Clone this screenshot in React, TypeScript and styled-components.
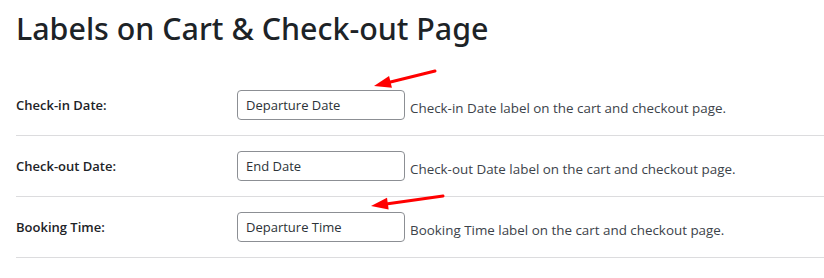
import React from 'react';
import styled, { createGlobalStyle } from 'styled-components';

const GlobalStyle = createGlobalStyle`
    body {
        margin: 0;
        background: #fff;
        font-family: 'Open Sans', 'Noto Sans', sans-serif;
        color: #1d2327;
    }
`;

interface IField {
    label: string;
    value: string;
    hint: string;
}

const fields: IField[] = [
    { label: 'Check-in Date:', value: 'Departure Date', hint: 'Check-in Date label on the cart and checkout page.' },
    { label: 'Check-out Date:', value: 'End Date', hint: 'Check-out Date label on the cart and checkout page.' },
    { label: 'Booking Time:', value: 'Departure Time', hint: 'Booking Time label on the cart and checkout page.' },
];

const Arrow = ({ x1, y1, x2, y2 }: { x1: number; y1: number; x2: number; y2: number }) => {
    const ang = Math.atan2(y2 - y1, x2 - x1);
    const len = 17;
    const half = 6;
    const bx = x2 - len * Math.cos(ang);
    const by = y2 - len * Math.sin(ang);
    const px = -Math.sin(ang) * half;
    const py = Math.cos(ang) * half;
    return (
        <g>
            <line x1={x1} y1={y1} x2={bx} y2={by} stroke="#f00" strokeWidth="3" strokeLinecap="round" />
            <polygon points={`${x2},${y2} ${bx + px},${by + py} ${bx - px},${by - py}`} fill="#f00" />
        </g>
    );
};

const App = () => {
    return (
        <Page>
            <GlobalStyle />
            <Title>Labels on Cart &amp; Check-out Page</Title>
            <Form>
                {fields.map(f => (
                    <Row key={f.label}>
                        <Label>{f.label}</Label>
                        <Cell>
                            <Input type="text" defaultValue={f.value} />
                            <Hint>{f.hint}</Hint>
                        </Cell>
                    </Row>
                ))}
            </Form>
            <Marks width="824" height="278" viewBox="0 0 824 278">
                <Arrow x1={435} y1={71} x2={374} y2={86} />
                <Arrow x1={443} y1={196} x2={371} y2={206} />
            </Marks>
        </Page>
    );
};

const Page = styled.div`
    position: relative;
    width: 824px;
    height: 278px;
    padding-left: 16px;
    box-sizing: border-box;
    overflow: hidden;
`;

const Title = styled.h1`
    margin: 0;
    padding-top: 9px;
    height: 75px;
    box-sizing: border-box;
    font-family: 'Noto Sans', 'Open Sans', sans-serif;
    font-size: 30.4px;
    font-weight: 500;
    line-height: 40px;
    color: #1d2327;
`;

const Form = styled.div`
    display: flex;
    flex-direction: column;
`;

const Row = styled.div`
    display: grid;
    grid-template-columns: 221px 1fr;
    align-items: center;
    padding: 15px 0;
    border-bottom: 1px solid #dcdcde;
`;

const Label = styled.div`
    font-size: 13px;
    font-weight: 600;
    color: #1d2327;
`;

const Cell = styled.div`
    display: flex;
    align-items: baseline;
    gap: 5px;
`;

const Input = styled.input`
    width: 168px;
    height: 30px;
    box-sizing: border-box;
    padding: 0 8px;
    border: 1px solid #8c8f94;
    border-radius: 4px;
    font-family: inherit;
    font-size: 13px;
    color: #2c3338;
    background: #fff;
    outline: none;
`;

const Hint = styled.span`
    font-size: 13.4px;
    color: #3c434a;
    transform: translateY(3px);
`;

const Marks = styled.svg`
    position: absolute;
    left: 0;
    top: 0;
    pointer-events: none;
`;

export default App;
